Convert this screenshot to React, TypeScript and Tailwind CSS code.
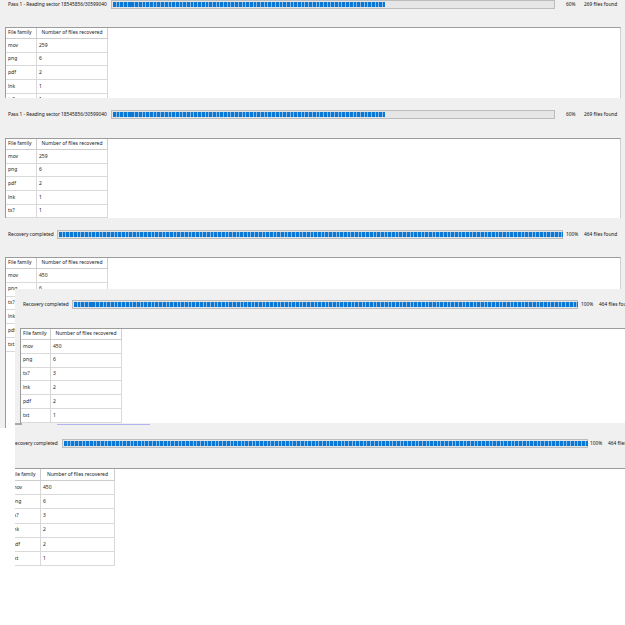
import React from "react";

type Row = [string, string];

const pass1Rows: Row[] = [
  ["mov", "259"],
  ["png", "6"],
  ["pdf", "2"],
  ["lnk", "1"],
  ["tx?", "1"],
];

const doneRows: Row[] = [
  ["mov", "450"],
  ["png", "6"],
  ["tx?", "3"],
  ["lnk", "2"],
  ["pdf", "2"],
  ["txt", "1"],
];

function Progress({ barW, inner, ratio }: { barW: string; inner: number; ratio: number }) {
  const fill = Math.round(inner * ratio);
  return (
    <div className={`${barW} h-[9px] shrink-0 border border-[#bcbcbc] bg-[#e6e6e6] p-[1px]`}>
      <div
        className="h-full bg-[repeating-linear-gradient(90deg,#0c78d6_0px,#0c78d6_2.7px,#86bbec_2.7px,#86bbec_3.7px)]"
        style={{ width: `${fill}px` }}
      />
    </div>
  );
}

function StatusLine({
  label,
  labelW,
  barW,
  inner,
  ratio,
  pct,
  pctGap,
  files,
  top,
}: {
  label: string;
  labelW: string;
  barW: string;
  inner: number;
  ratio: number;
  pct: string;
  pctGap: string;
  files: string;
  top: string;
}) {
  return (
    <div className={`flex h-[9px] shrink-0 items-center pl-[8px] text-[4.8px] text-[#111] whitespace-nowrap ${top}`}>
      <span className={`${labelW} shrink-0`}>{label}</span>
      <Progress barW={barW} inner={inner} ratio={ratio} />
      <span className={`${pctGap} w-[18px] shrink-0`}>{pct}</span>
      <span className="shrink-0">{files}</span>
    </div>
  );
}

function FamilyTable({
  rows,
  c1,
  c2,
  headH,
  rowH,
  place,
}: {
  rows: Row[];
  c1: string;
  c2: string;
  headH: string;
  rowH: string;
  place: string;
}) {
  return (
    <div className={`flex flex-1 flex-col border-t border-l border-[#9c9c9c] bg-white text-[5px] text-[#222] ${place}`}>
      <div className={`flex ${headH} shrink-0`}>
        <div className={`${c1} flex items-center border-r border-b border-[#cdcdcd] pl-[2px] whitespace-nowrap`}>
          File family
        </div>
        <div className={`${c2} flex items-center justify-center border-r border-b border-[#cdcdcd] whitespace-nowrap`}>
          Number of files recovered
        </div>
      </div>
      {rows.map(([fam, n]) => (
        <div key={fam} className={`flex ${rowH} shrink-0`}>
          <div className={`${c1} flex items-center border-r border-b border-[#d9d9d9] pl-[2px]`}>{fam}</div>
          <div className={`${c2} flex items-center border-r border-b border-[#d9d9d9] pl-[2px]`}>{n}</div>
        </div>
      ))}
    </div>
  );
}

export default function App() {
  return (
    <div
      className="relative flex h-[625px] w-[625px] flex-col overflow-hidden bg-white"
      style={{ fontFamily: '"Noto Sans", "Open Sans", sans-serif' }}
    >
      {/* pass 1, first snapshot */}
      <section className="flex h-[98px] shrink-0 flex-col overflow-hidden bg-[#f0f0f0]">
        <StatusLine
          top="mt-[0px]"
          label="Pass 1 - Reading sector 18545856/30599040"
          labelW="w-[103px]"
          barW="w-[444px]"
          inner={442}
          ratio={0.615}
          pct="60%"
          pctGap="ml-[11px]"
          files="269 files found"
        />
        <FamilyTable
          rows={pass1Rows}
          place="mt-[18px] ml-[5px] mr-[4px] border-r border-r-[#d0d0d0]"
          c1="w-[31px]"
          c2="w-[71px]"
          headH="h-[11px]"
          rowH="h-[13.7px]"
        />
      </section>

      {/* pass 1, second snapshot */}
      <section className="flex h-[122px] shrink-0 flex-col overflow-hidden bg-[#f0f0f0] pb-[2px]">
        <StatusLine
          top="mt-[12px]"
          label="Pass 1 - Reading sector 18545856/30599040"
          labelW="w-[103px]"
          barW="w-[444px]"
          inner={442}
          ratio={0.615}
          pct="60%"
          pctGap="ml-[11px]"
          files="269 files found"
        />
        <FamilyTable
          rows={pass1Rows}
          place="mt-[19px] ml-[5px] mr-[4px] border-r border-r-[#d0d0d0]"
          c1="w-[31px]"
          c2="w-[71px]"
          headH="h-[11px]"
          rowH="h-[13.7px]"
        />
      </section>

      {/* recovery finished */}
      <section className="flex h-[208px] shrink-0 flex-col overflow-hidden bg-[#f0f0f0]">
        <StatusLine
          top="mt-[10px]"
          label="Recovery completed"
          labelW="w-[49px]"
          barW="w-[506px]"
          inner={504}
          ratio={1}
          pct="100%"
          pctGap="ml-[3px]"
          files="464 files found"
        />
        <FamilyTable
          rows={doneRows}
          place="mt-[18px] ml-[5px] mr-[4px] border-r border-r-[#d0d0d0]"
          c1="w-[31px]"
          c2="w-[71px]"
          headH="h-[11px]"
          rowH="h-[13.8px]"
        />
      </section>

      {/* second window laid over the finished one */}
      <section className="absolute top-[289px] left-[15px] flex h-[139px] w-[610px] flex-col overflow-hidden bg-[#f0f0f0]">
        <StatusLine
          top="mt-[11px]"
          label="Recovery completed"
          labelW="w-[49px]"
          barW="w-[506px]"
          inner={504}
          ratio={1}
          pct="100%"
          pctGap="ml-[3px]"
          files="464 files found"
        />
        <FamilyTable
          rows={doneRows}
          place="mt-[19px] ml-[5px] mr-[-30px]"
          c1="w-[30px]"
          c2="w-[71px]"
          headH="h-[11px]"
          rowH="h-[13.8px]"
        />
        <div className="flex h-[5px] shrink-0 items-start">
          <div className="h-[2px] w-[7px] bg-[#a8a8a8]" />
          <div className="mt-[1px] ml-[35px] h-[1px] w-[93px] bg-[#b3b3f0]" />
        </div>
      </section>

      {/* wider window, clipped on the left */}
      <section className="ml-[15px] flex h-[197px] shrink-0 flex-col overflow-hidden bg-[#f0f0f0]">
        <div className="ml-[-11px] flex flex-1 flex-col">
          <StatusLine
            top="mt-[11px]"
            label="Recovery completed"
            labelW="w-[50px]"
            barW="w-[526px]"
            inner={524}
            ratio={1}
            pct="100%"
            pctGap="ml-[2px]"
            files="464 files found"
          />
          <FamilyTable
            rows={doneRows}
            place="mt-[20px] ml-[5px] mr-[-30px]"
            c1="w-[31px]"
            c2="w-[74px]"
            headH="h-[12px]"
            rowH="h-[14.2px]"
          />
        </div>
      </section>
    </div>
  );
}
